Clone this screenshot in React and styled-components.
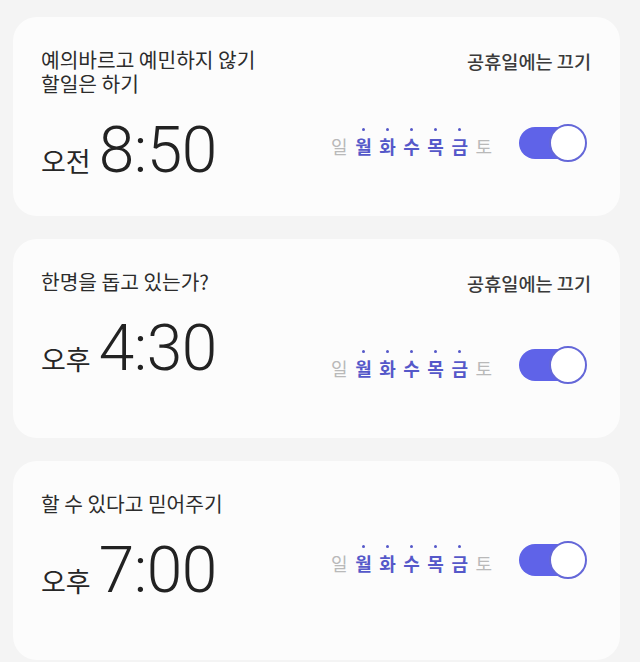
import React from "react";
import styled, { createGlobalStyle } from "styled-components";

const Global = createGlobalStyle`
  html, body { margin: 0; padding: 0; background: #f4f4f4; }
  body { font-family: "Noto Sans CJK KR", "Noto Sans", sans-serif; overflow: hidden; }
`;

const Page = styled.div`
  display: flex;
  flex-direction: column;
  gap: 23px;
  padding: 17px 20px 0 13px;
  height: 662px;
  box-sizing: border-box;
  overflow: hidden;
`;

const Card = styled.div`
  flex: 0 0 199px;
  background: #fcfcfc;
  border-radius: 24px;
  padding: 30px 29px 0 28px;
  box-sizing: border-box;
  display: flex;
  justify-content: space-between;
  align-items: flex-start;
`;

const Left = styled.div`
  display: flex;
  flex-direction: column;
`;

const Title = styled.div`
  font-size: 20.3px;
  line-height: 24px;
  color: #2c2c2c;
  white-space: pre-line;
`;

const TimeRow = styled.div`
  display: flex;
  align-items: baseline;
  gap: 8px;
  margin-top: 24px;
`;

const Meridiem = styled.span`
  font-size: 27px;
  line-height: 1;
  color: #262626;
`;

const Digits = styled.span`
  font-family: Roboto, "Liberation Sans", sans-serif;
  font-weight: 300;
  font-size: 64px;
  line-height: 1;
  color: #222;
  letter-spacing: -0.5px;
`;

const Right = styled.div`
  display: flex;
  flex-direction: column;
  align-items: flex-end;
`;

const Holiday = styled.div`
  font-size: 18.6px;
  line-height: 27px;
  font-weight: 500;
  color: #3a3a3a;
`;

const Controls = styled.div`
  display: flex;
  align-items: center;
  gap: 27px;
  margin-top: 50px;
  margin-right: 4px;
`;

const Days = styled.div`
  display: flex;
  gap: 7.5px;
  padding-top: 5px;
`;

const Day = styled.span`
  position: relative;
  font-size: 18px;
  line-height: 22px;
  font-weight: ${(p) => (p.$on ? 600 : 400)};
  color: ${(p) => (p.$on ? "#5558c9" : "#b9b9b9")};
  &::before {
    content: "";
    display: ${(p) => (p.$on ? "block" : "none")};
    position: absolute;
    top: -7px;
    left: 50%;
    width: 3px;
    height: 3px;
    margin-left: -1.5px;
    border-radius: 50%;
    background: #5558c9;
  }
`;

const Toggle = styled.div`
  position: relative;
  width: 68px;
  height: 38px;
`;

const Track = styled.div`
  position: absolute;
  left: 0;
  top: 3px;
  width: 62px;
  height: 32px;
  border-radius: 16px;
  background: #5f63e8;
`;

const Thumb = styled.div`
  position: absolute;
  right: 0;
  top: 0;
  width: 38px;
  height: 38px;
  box-sizing: border-box;
  border-radius: 50%;
  border: 2px solid #6467d8;
  background: #fff;
`;

const DAYS = [
  ["일", false],
  ["월", true],
  ["화", true],
  ["수", true],
  ["목", true],
  ["금", true],
  ["토", false],
];

const alarms = [
  { title: "예의바르고 예민하지 않기\n할일은 하기", mer: "오전", time: "8:50", holiday: true },
  { title: "한명을 돕고 있는가?", mer: "오후", time: "4:30", holiday: true },
  { title: "할 수 있다고 믿어주기", mer: "오후", time: "7:00", holiday: false },
];

function Alarm({ a }) {
  return (
    <Card>
      <Left>
        <Title>{a.title}</Title>
        <TimeRow>
          <Meridiem>{a.mer}</Meridiem>
          <Digits>{a.time}</Digits>
        </TimeRow>
      </Left>
      <Right>
        {a.holiday && <Holiday>공휴일에는 끄기</Holiday>}
        <Controls>
          <Days>
            {DAYS.map(([d, on]) => (
              <Day key={d} $on={on}>{d}</Day>
            ))}
          </Days>
          <Toggle>
            <Track />
            <Thumb />
          </Toggle>
        </Controls>
      </Right>
    </Card>
  );
}

export default function App() {
  return (
    <>
      <Global />
      <Page>
        {alarms.map((a) => (
          <Alarm key={a.time} a={a} />
        ))}
      </Page>
    </>
  );
}
